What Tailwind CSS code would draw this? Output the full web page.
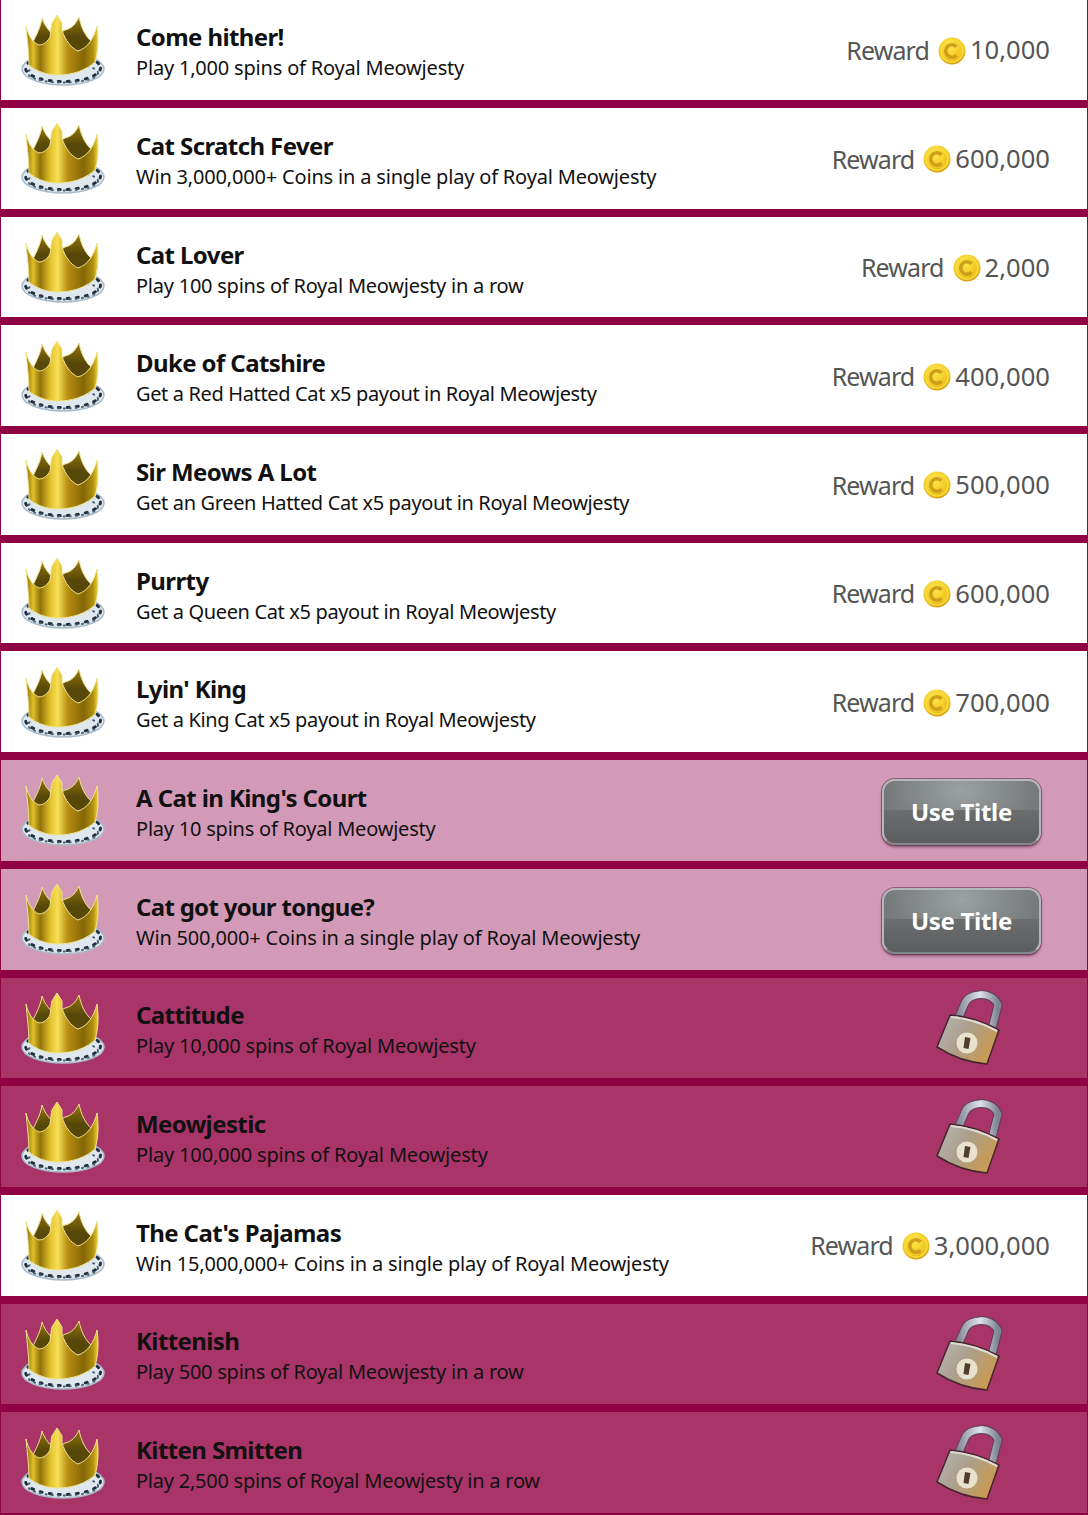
<!DOCTYPE html>
<html lang="en">
<head>
    <meta charset="UTF-8">
    <title>Royal Meowjesty Titles</title>
    <script src="https://cdn.jsdelivr.net/npm/@tailwindcss/browser@4"></script>
</head>
<body class="bg-[#8f0345] font-['Noto_Sans',sans-serif] text-[#111] h-[1515px] overflow-hidden">
    <!-- shared artwork -->
    <svg class="absolute w-0 h-0">
        <defs>
            <linearGradient id="gold" x1="0" y1="0" x2="1" y2="0">
                <stop offset="0" stop-color="#8a6c06"/>
                <stop offset=".1" stop-color="#e0c028"/>
                <stop offset=".2" stop-color="#8f7208"/>
                <stop offset=".34" stop-color="#e4c22e"/>
                <stop offset=".44" stop-color="#f7df55"/>
                <stop offset=".58" stop-color="#b98e14"/>
                <stop offset=".8" stop-color="#836606"/>
                <stop offset=".93" stop-color="#b0900f"/>
                <stop offset="1" stop-color="#efd43c"/>
            </linearGradient>
            <linearGradient id="back" x1="0" y1="0" x2="0" y2="1">
                <stop offset="0" stop-color="#94780f"/>
                <stop offset=".55" stop-color="#574708"/>
            </linearGradient>
            <radialGradient id="coin" cx=".42" cy=".32" r=".75">
                <stop offset="0" stop-color="#ffe94d"/>
                <stop offset=".72" stop-color="#efc11c"/>
                <stop offset="1" stop-color="#c98f10"/>
            </radialGradient>
            <linearGradient id="body" x1="0" y1="0" x2="1" y2=".5">
                <stop offset="0" stop-color="#b9b9b4"/>
                <stop offset=".5" stop-color="#ab9f8d"/>
                <stop offset="1" stop-color="#c99a52"/>
            </linearGradient>
            <linearGradient id="shackle" x1="0" y1="0" x2="1" y2="0">
                <stop offset="0" stop-color="#858a96"/>
                <stop offset=".55" stop-color="#dfe2e8"/>
                <stop offset="1" stop-color="#7e8390"/>
            </linearGradient>
            <symbol id="crown" viewBox="20 12 88 76">
                <ellipse cx="63" cy="69" rx="41" ry="16" fill="#dfe8ee" stroke="#a9bccb" stroke-width="1.5"/>
                <ellipse cx="63" cy="68" rx="37.5" ry="13.5" fill="none" stroke="#22303f" stroke-width="3" stroke-linecap="round" stroke-dasharray="2 7"/>
                <ellipse cx="63" cy="73" rx="35" ry="9.5" fill="none" stroke="#4c6072" stroke-width="2" stroke-linecap="round" stroke-dasharray="1 5"/>
                <path d="M32 44 C37 34 41 26 42 18 C45 27 50 32 55 36 L65 30 C71 29 76 24 79 17 C81 27 85 36 92 42 L78 54 L40 54Z" fill="url(#back)" stroke="#efe08a" stroke-width="1"/>
                <path d="M26 26 C28 35 32 42 39 45 C44 45 48 41 50 37 C51 31 51 26 52 23 L57 15 L62 23 L62 30 C65 40 71 48 78 51 C88 48 94 38 97 26 C99 40 98 52 95 62 C85 71 72 75 58 75 C46 75 36 71 29 65 C29 52 27 38 26 26Z" fill="url(#gold)" stroke="#f0e48e" stroke-width="1"/>
            </symbol>
            <symbol id="coin-icon" viewBox="0 0 28 28">
                <circle cx="14" cy="14" r="13.5" fill="url(#coin)"/>
                <circle cx="14" cy="14" r="11" fill="none" stroke="#f9dd3e" stroke-width="1.5"/>
                <path d="M18.5 9.8 A6.2 6.2 0 1 0 18.5 18.2" fill="none" stroke="#cf9f1c" stroke-width="3.6"/>
            </symbol>
            <symbol id="lock" viewBox="930 985 78 82">
                <path d="M958 1017 L965 1001 C969 991 992 988 998 1003 L992 1027" fill="none" stroke="#5b4050" stroke-width="9"/>
                <path d="M958 1017 L965 1001 C969 991 992 988 998 1003 L992 1027" fill="none" stroke="url(#shackle)" stroke-width="7"/>
                <path d="M950 1013 Q975 1015 999 1028 L987 1062 Q960 1060 937 1045Z" fill="url(#body)" stroke="#46242f" stroke-width="1.5" stroke-linejoin="round"/>
                <path d="M951 1015 Q975 1017 997 1029" fill="none" stroke="#dedcd4" stroke-width="2"/>
                <circle cx="967" cy="1041" r="10.5" fill="#e8e2cc"/>
                <path d="M965 1035 L970.5 1036 L968.5 1047 L963.5 1046Z" fill="#4e3d2b"/>
            </symbol>
        </defs>
    </svg>

    <main class="-mt-[0.7px]">
        <div class="h-[108.7px] flex items-center bg-white border-x border-b-8 border-[#8f0345]">
            <svg class="w-[88px] h-[76px] ml-[19px] mr-[28px] shrink-0"><use href="#crown"/></svg>
            <div class="pt-[3px]"><h2 class="text-[24px] leading-[34px] font-bold tracking-[-0.6px]">Come hither!</h2><p class="text-[20px] leading-[28px] tracking-[-0.19px]">Play 1,000 spins of Royal Meowjesty</p></div>
            <div class="ml-auto mr-[37px] mt-[2px] flex items-center text-[25.6px] text-[#555]"><span class="text-[25px] tracking-[-0.9px]">Reward</span><svg class="w-[28px] h-[28px] ml-[9px] mr-[4px]"><use href="#coin-icon"/></svg><span>10,000</span></div>
        </div>
        <div class="h-[108.7px] flex items-center bg-white border-x border-b-8 border-[#8f0345]">
            <svg class="w-[88px] h-[76px] ml-[19px] mr-[28px] shrink-0"><use href="#crown"/></svg>
            <div class="pt-[3px]"><h2 class="text-[24px] leading-[34px] font-bold tracking-[-0.6px]">Cat Scratch Fever</h2><p class="text-[20px] leading-[28px] tracking-[-0.18px]">Win 3,000,000+ Coins in a single play of Royal Meowjesty</p></div>
            <div class="ml-auto mr-[37px] mt-[2px] flex items-center text-[25.6px] text-[#555]"><span class="text-[25px] tracking-[-0.9px]">Reward</span><svg class="w-[28px] h-[28px] ml-[9px] mr-[4px]"><use href="#coin-icon"/></svg><span>600,000</span></div>
        </div>
        <div class="h-[108.7px] flex items-center bg-white border-x border-b-8 border-[#8f0345]">
            <svg class="w-[88px] h-[76px] ml-[19px] mr-[28px] shrink-0"><use href="#crown"/></svg>
            <div class="pt-[3px]"><h2 class="text-[24px] leading-[34px] font-bold tracking-[-0.6px]">Cat Lover</h2><p class="text-[20px] leading-[28px] tracking-[-0.24px]">Play 100 spins of Royal Meowjesty in a row</p></div>
            <div class="ml-auto mr-[37px] mt-[2px] flex items-center text-[25.6px] text-[#555]"><span class="text-[25px] tracking-[-0.9px]">Reward</span><svg class="w-[28px] h-[28px] ml-[9px] mr-[4px]"><use href="#coin-icon"/></svg><span>2,000</span></div>
        </div>
        <div class="h-[108.7px] flex items-center bg-white border-x border-b-8 border-[#8f0345]">
            <svg class="w-[88px] h-[76px] ml-[19px] mr-[28px] shrink-0"><use href="#crown"/></svg>
            <div class="pt-[3px]"><h2 class="text-[24px] leading-[34px] font-bold tracking-[-0.6px]">Duke of Catshire</h2><p class="text-[20px] leading-[28px] tracking-[-0.36px]">Get a Red Hatted Cat x5 payout in Royal Meowjesty</p></div>
            <div class="ml-auto mr-[37px] mt-[2px] flex items-center text-[25.6px] text-[#555]"><span class="text-[25px] tracking-[-0.9px]">Reward</span><svg class="w-[28px] h-[28px] ml-[9px] mr-[4px]"><use href="#coin-icon"/></svg><span>400,000</span></div>
        </div>
        <div class="h-[108.7px] flex items-center bg-white border-x border-b-8 border-[#8f0345]">
            <svg class="w-[88px] h-[76px] ml-[19px] mr-[28px] shrink-0"><use href="#crown"/></svg>
            <div class="pt-[3px]"><h2 class="text-[24px] leading-[34px] font-bold tracking-[-0.6px]">Sir Meows A Lot</h2><p class="text-[20px] leading-[28px] tracking-[-0.36px]">Get an Green Hatted Cat x5 payout in Royal Meowjesty</p></div>
            <div class="ml-auto mr-[37px] mt-[2px] flex items-center text-[25.6px] text-[#555]"><span class="text-[25px] tracking-[-0.9px]">Reward</span><svg class="w-[28px] h-[28px] ml-[9px] mr-[4px]"><use href="#coin-icon"/></svg><span>500,000</span></div>
        </div>
        <div class="h-[108.7px] flex items-center bg-white border-x border-b-8 border-[#8f0345]">
            <svg class="w-[88px] h-[76px] ml-[19px] mr-[28px] shrink-0"><use href="#crown"/></svg>
            <div class="pt-[3px]"><h2 class="text-[24px] leading-[34px] font-bold tracking-[-0.6px]">Purrty</h2><p class="text-[20px] leading-[28px] tracking-[-0.36px]">Get a Queen Cat x5 payout in Royal Meowjesty</p></div>
            <div class="ml-auto mr-[37px] mt-[2px] flex items-center text-[25.6px] text-[#555]"><span class="text-[25px] tracking-[-0.9px]">Reward</span><svg class="w-[28px] h-[28px] ml-[9px] mr-[4px]"><use href="#coin-icon"/></svg><span>600,000</span></div>
        </div>
        <div class="h-[108.7px] flex items-center bg-white border-x border-b-8 border-[#8f0345]">
            <svg class="w-[88px] h-[76px] ml-[19px] mr-[28px] shrink-0"><use href="#crown"/></svg>
            <div class="pt-[3px]"><h2 class="text-[24px] leading-[34px] font-bold tracking-[-0.6px]">Lyin' King</h2><p class="text-[20px] leading-[28px] tracking-[-0.36px]">Get a King Cat x5 payout in Royal Meowjesty</p></div>
            <div class="ml-auto mr-[37px] mt-[2px] flex items-center text-[25.6px] text-[#555]"><span class="text-[25px] tracking-[-0.9px]">Reward</span><svg class="w-[28px] h-[28px] ml-[9px] mr-[4px]"><use href="#coin-icon"/></svg><span>700,000</span></div>
        </div>
        <div class="h-[108.7px] flex items-center bg-[#d39ab8] border-x border-b-8 border-[#8f0345]">
            <svg class="w-[88px] h-[76px] ml-[19px] mr-[28px] shrink-0"><use href="#crown"/></svg>
            <div class="pt-[3px]"><h2 class="text-[24px] leading-[34px] font-bold tracking-[-0.6px]">A Cat in King's Court</h2><p class="text-[20px] leading-[28px] tracking-[-0.22px]">Play 10 spins of Royal Meowjesty</p></div>
            <button class="ml-auto mr-[46px] mt-[3px] w-[159px] h-[66px] rounded-[13px] border-2 border-[#b4b8b8] border-b-[#84878a] text-white text-[24px] font-bold tracking-[-0.3px] bg-[linear-gradient(transparent_47%,#6c6d6e_47%,#5c5d5e),radial-gradient(ellipse_at_50%_15%,#9ca1a1,#757979_70%)] shadow-[0_0_0_1px_rgba(90,50,70,0.55),0_2px_3px_rgba(70,20,45,0.6)]">Use Title</button>
        </div>
        <div class="h-[108.7px] flex items-center bg-[#d39ab8] border-x border-b-8 border-[#8f0345]">
            <svg class="w-[88px] h-[76px] ml-[19px] mr-[28px] shrink-0"><use href="#crown"/></svg>
            <div class="pt-[3px]"><h2 class="text-[24px] leading-[34px] font-bold tracking-[-0.7px]">Cat got your tongue?</h2><p class="text-[20px] leading-[28px] tracking-[-0.18px]">Win 500,000+ Coins in a single play of Royal Meowjesty</p></div>
            <button class="ml-auto mr-[46px] mt-[3px] w-[159px] h-[66px] rounded-[13px] border-2 border-[#b4b8b8] border-b-[#84878a] text-white text-[24px] font-bold tracking-[-0.3px] bg-[linear-gradient(transparent_47%,#6c6d6e_47%,#5c5d5e),radial-gradient(ellipse_at_50%_15%,#9ca1a1,#757979_70%)] shadow-[0_0_0_1px_rgba(90,50,70,0.55),0_2px_3px_rgba(70,20,45,0.6)]">Use Title</button>
        </div>
        <div class="h-[108.7px] flex items-center bg-[#a93468] border-x border-b-8 border-[#8f0345]">
            <svg class="w-[88px] h-[76px] ml-[19px] mr-[28px] shrink-0"><use href="#crown"/></svg>
            <div class="pt-[3px]"><h2 class="text-[24px] leading-[34px] font-bold tracking-[-0.6px]">Cattitude</h2><p class="text-[20px] leading-[28px] tracking-[-0.18px]">Play 10,000 spins of Royal Meowjesty</p></div>
            <svg class="ml-auto mr-[79px] w-[78px] h-[82px]"><use href="#lock"/></svg>
        </div>
        <div class="h-[108.7px] flex items-center bg-[#a93468] border-x border-b-8 border-[#8f0345]">
            <svg class="w-[88px] h-[76px] ml-[19px] mr-[28px] shrink-0"><use href="#crown"/></svg>
            <div class="pt-[3px]"><h2 class="text-[24px] leading-[34px] font-bold tracking-[-0.6px]">Meowjestic</h2><p class="text-[20px] leading-[28px] tracking-[-0.16px]">Play 100,000 spins of Royal Meowjesty</p></div>
            <svg class="ml-auto mr-[79px] w-[78px] h-[82px]"><use href="#lock"/></svg>
        </div>
        <div class="h-[108.7px] flex items-center bg-white border-x border-b-8 border-[#8f0345]">
            <svg class="w-[88px] h-[76px] ml-[19px] mr-[28px] shrink-0"><use href="#crown"/></svg>
            <div class="pt-[3px]"><h2 class="text-[24px] leading-[34px] font-bold tracking-[-0.6px]">The Cat's Pajamas</h2><p class="text-[20px] leading-[28px] tracking-[-0.16px]">Win 15,000,000+ Coins in a single play of Royal Meowjesty</p></div>
            <div class="ml-auto mr-[37px] mt-[2px] flex items-center text-[25.6px] text-[#555]"><span class="text-[25px] tracking-[-0.9px]">Reward</span><svg class="w-[28px] h-[28px] ml-[9px] mr-[4px]"><use href="#coin-icon"/></svg><span>3,000,000</span></div>
        </div>
        <div class="h-[108.7px] flex items-center bg-[#a93468] border-x border-b-8 border-[#8f0345]">
            <svg class="w-[88px] h-[76px] ml-[19px] mr-[28px] shrink-0"><use href="#crown"/></svg>
            <div class="pt-[3px]"><h2 class="text-[24px] leading-[34px] font-bold tracking-[-0.6px]">Kittenish</h2><p class="text-[20px] leading-[28px] tracking-[-0.24px]">Play 500 spins of Royal Meowjesty in a row</p></div>
            <svg class="ml-auto mr-[79px] w-[78px] h-[82px]"><use href="#lock"/></svg>
        </div>
        <div class="h-[108.7px] flex items-center bg-[#a93468] border-x border-b-8 border-[#8f0345]">
            <svg class="w-[88px] h-[76px] ml-[19px] mr-[28px] shrink-0"><use href="#crown"/></svg>
            <div class="pt-[3px]"><h2 class="text-[24px] leading-[34px] font-bold tracking-[-0.6px]">Kitten Smitten</h2><p class="text-[20px] leading-[28px] tracking-[-0.24px]">Play 2,500 spins of Royal Meowjesty in a row</p></div>
            <svg class="ml-auto mr-[79px] w-[78px] h-[82px]"><use href="#lock"/></svg>
        </div>
    </main>
</body>
</html>
